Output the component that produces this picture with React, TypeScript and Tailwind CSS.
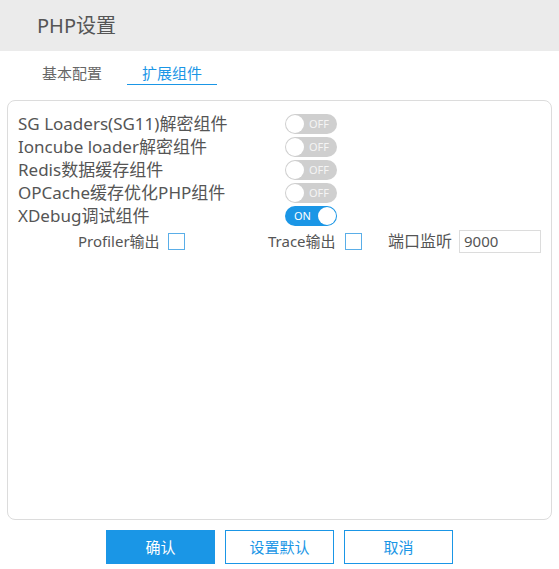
import { useState } from 'react';

interface Plugin {
    name: string,
    enabled: boolean;
}

const initialPlugins: Plugin[] = [
    { name: 'SG Loaders(SG11)解密组件', enabled: false },
    { name: 'Ioncube loader解密组件', enabled: false },
    { name: 'Redis数据缓存组件', enabled: false },
    { name: 'OPCache缓存优化PHP组件', enabled: false },
    { name: 'XDebug调试组件', enabled: true },
];

const Toggle = ({ on, onClick }: { on: boolean, onClick: () => void }) => (
    <button
        type="button"
        onClick={onClick}
        className={`relative h-[20px] w-[52px] shrink-0 rounded-full text-[11px] leading-[20px] ${on ? 'bg-[#1a96e6] text-white' : 'bg-[#cfcfcf] text-white'}`}
    >
        {on ? (
            <>
                <span className="absolute left-[9px] top-0">ON</span>
                <span className="absolute right-[1px] top-[1px] h-[18px] w-[18px] rounded-full bg-white" />
            </>
        ) : (
            <>
                <span className="absolute left-[1px] top-[1px] h-[18px] w-[18px] rounded-full bg-white" />
                <span className="absolute right-[8px] top-0 text-[#f4f4f4]">OFF</span>
            </>
        )}
    </button>
);

const App = () => {
    const [plugins, setPlugins] = useState<Plugin[]>(initialPlugins);
    const [port, setPort] = useState('9000');

    const togglePlugin = (i: number) => {
        setPlugins(plugins.map((p, idx) => idx === i ? { ...p, enabled: !p.enabled } : p));
    };

    return (
        <div className="h-[569px] w-[559px] bg-white text-[#555] font-['Noto_Sans','Noto_Sans_CJK_SC',sans-serif]">
            <div className="flex h-[51px] items-center bg-[#ebebeb] pl-[37px] text-[20px] text-[#555]">PHP设置</div>
            <div className="flex h-[34px] items-end pl-[27px] text-[15px]">
                <div className="w-[100px] pb-[1px] pl-[15px] leading-[22px] text-[#666]">基本配置</div>
                <div className="w-[90px] border-b border-[#1a96e6] pl-[15px] leading-[22px] text-[#1a96e6]">扩展组件</div>
            </div>
            <div className="mx-[7px] mt-[15px] h-[420px] rounded-[8px] border border-[#dcdcdc] pl-[10px] pt-[11px]">
                {plugins.map((p, i) => (
                    <div key={p.name} className="flex h-[23px] items-center">
                        <span className="w-[267px] whitespace-nowrap text-[17px] leading-[23px]">{p.name}</span>
                        <Toggle on={p.enabled} onClick={() => togglePlugin(i)} />
                    </div>
                ))}
                <div className="mt-[2px] flex h-[24px] items-center whitespace-nowrap text-[15px]">
                    <span className="ml-[60px] w-[90px]">Profiler输出</span>
                    <span className="h-[17px] w-[17px] border border-[#5aaee8]" />
                    <span className="ml-[83px] w-[77px]">Trace输出</span>
                    <span className="h-[17px] w-[17px] border border-[#5aaee8]" />
                    <span className="ml-[26px] w-[71px] text-[16px]">端口监听</span>
                    <input
                        className="h-[23px] w-[82px] border border-[#dcdcdc] px-[4px] text-[15px] text-[#555] outline-none"
                        value={port}
                        onChange={(e) => setPort(e.target.value)}
                    />
                </div>
            </div>
            <div className="mt-[10px] flex gap-[10px] pl-[106px] text-[15px]">
                <button className="h-[34px] w-[109px] bg-[#1a96e6] text-white">确认</button>
                <button className="h-[34px] w-[109px] border border-[#1a96e6] text-[#1a96e6]">设置默认</button>
                <button className="h-[34px] w-[109px] border border-[#1a96e6] text-[#1a96e6]">取消</button>
            </div>
        </div>
    );
};

export default App;
